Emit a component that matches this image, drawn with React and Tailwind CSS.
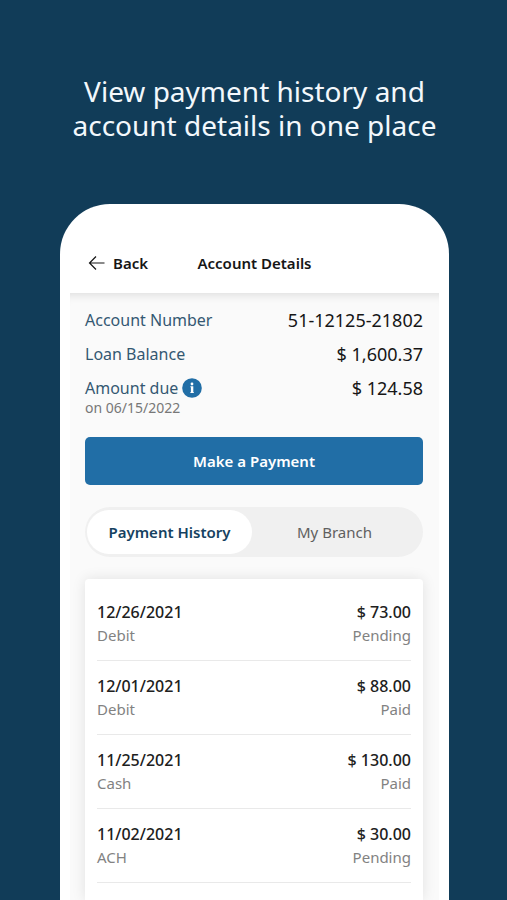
const payments = [
  { date: "12/26/2021", method: "Debit", amount: "$ 73.00", status: "Pending" },
  { date: "12/01/2021", method: "Debit", amount: "$ 88.00", status: "Paid" },
  { date: "11/25/2021", method: "Cash", amount: "$ 130.00", status: "Paid" },
  { date: "11/02/2021", method: "ACH", amount: "$ 30.00", status: "Pending" },
];

function BackArrow() {
  return (
    <svg width="17" height="16" viewBox="0 0 17 16" fill="none" stroke="currentColor" strokeWidth="1.2" aria-hidden="true">
      <path d="M16.5 8H1.5M8 1.5L1.5 8L8 14.5" />
    </svg>
  );
}

function InfoIcon() {
  return (
    <svg width="20" height="20" viewBox="0 0 20 20" aria-hidden="true">
      <circle cx="10" cy="10" r="9.8" fill="#216ea6" />
      <circle cx="10" cy="6" r="1.4" fill="#fff" />
      <path d="M8.4 8.3H11.3V14H11.8V15H8.4V14H8.9V9.3H8.4Z" fill="#fff" />
    </svg>
  );
}

function Header() {
  return (
    <header className="grid h-[89px] shrink-0 grid-cols-[1fr_auto_1fr] items-center px-7 pt-7 text-[15px] leading-5 font-semibold text-[#161616]">
      <button type="button" className="flex items-center gap-2 justify-self-start">
        <BackArrow />
        Back
      </button>
      <h2>Account Details</h2>
    </header>
  );
}

function Summary() {
  return (
    <dl className="text-base leading-6 text-[#345872]">
      <div className="flex h-[34px] items-start justify-between">
        <dt>Account Number</dt>
        <dd className="text-lg leading-6 text-[#161616]">51-12125-21802</dd>
      </div>
      <div className="flex h-[34px] items-start justify-between">
        <dt>Loan Balance</dt>
        <dd className="text-lg leading-6 text-[#161616]">$ 1,600.37</dd>
      </div>
      <div className="flex items-start justify-between">
        <dt>
          <span className="flex items-center gap-1">
            Amount due
            <button type="button" aria-label="About the amount due">
              <InfoIcon />
            </button>
          </span>
          <span className="block text-sm leading-4 text-[#777]">on 06/15/2022</span>
        </dt>
        <dd className="text-lg leading-6 text-[#161616]">$ 124.58</dd>
      </div>
    </dl>
  );
}

function Tabs() {
  return (
    <div role="tablist" className="mt-[22px] grid h-[50px] shrink-0 grid-cols-2 rounded-full bg-[#f0f0f0] py-[3px] pr-[6px] pl-[2px] text-[15px]">
      <button type="button" role="tab" aria-selected="true" className="rounded-full bg-white font-semibold text-[#164261]">
        Payment History
      </button>
      <button type="button" role="tab" aria-selected="false" className="rounded-full text-[#5f5f5f]">
        My Branch
      </button>
    </div>
  );
}

function PaymentList() {
  return (
    <ul className="mt-[22px] flex-1 rounded-t bg-white px-3 pt-2 shadow-[0_0_14px_rgba(0,0,0,0.1)]">
      {payments.map((p) => (
        <li key={p.date} className="flex h-[74px] items-center justify-between border-b border-[#e9e9e9] py-2 text-[15px] leading-[23px]">
          <div>
            <p className="text-base leading-[23px] font-medium text-[#202020]">{p.date}</p>
            <p className="text-[#828282]">{p.method}</p>
          </div>
          <div className="text-right">
            <p className="text-base leading-[23px] font-medium text-[#202020]">{p.amount}</p>
            <p className="text-[#828282]">{p.status}</p>
          </div>
        </li>
      ))}
    </ul>
  );
}

export default function App() {
  return (
    <main className="flex min-h-screen flex-col bg-[#113c58] pr-[58px] pl-[60px] font-['Noto_Sans',sans-serif]">
      <h1 className="-mx-8 pt-[74px] text-center text-[28px] leading-[34px] text-[#f3f8fc]">
        View payment history and
        <br />
        account details in one place
      </h1>
      <section className="mt-[62px] flex flex-1 flex-col rounded-t-[50px] bg-white">
        <Header />
        <div className="mx-[10px] flex flex-1 flex-col overflow-hidden bg-[#fafafa] pt-[15px] pr-4 pl-[15px] shadow-[inset_0_10px_10px_-8px_rgba(0,0,0,0.12)]">
          <Summary />
          <button type="button" className="mt-[21px] h-12 shrink-0 rounded-[5px] bg-[#216ea6] text-[15px] font-semibold text-white">
            Make a Payment
          </button>
          <Tabs />
          <PaymentList />
        </div>
      </section>
    </main>
  );
}
